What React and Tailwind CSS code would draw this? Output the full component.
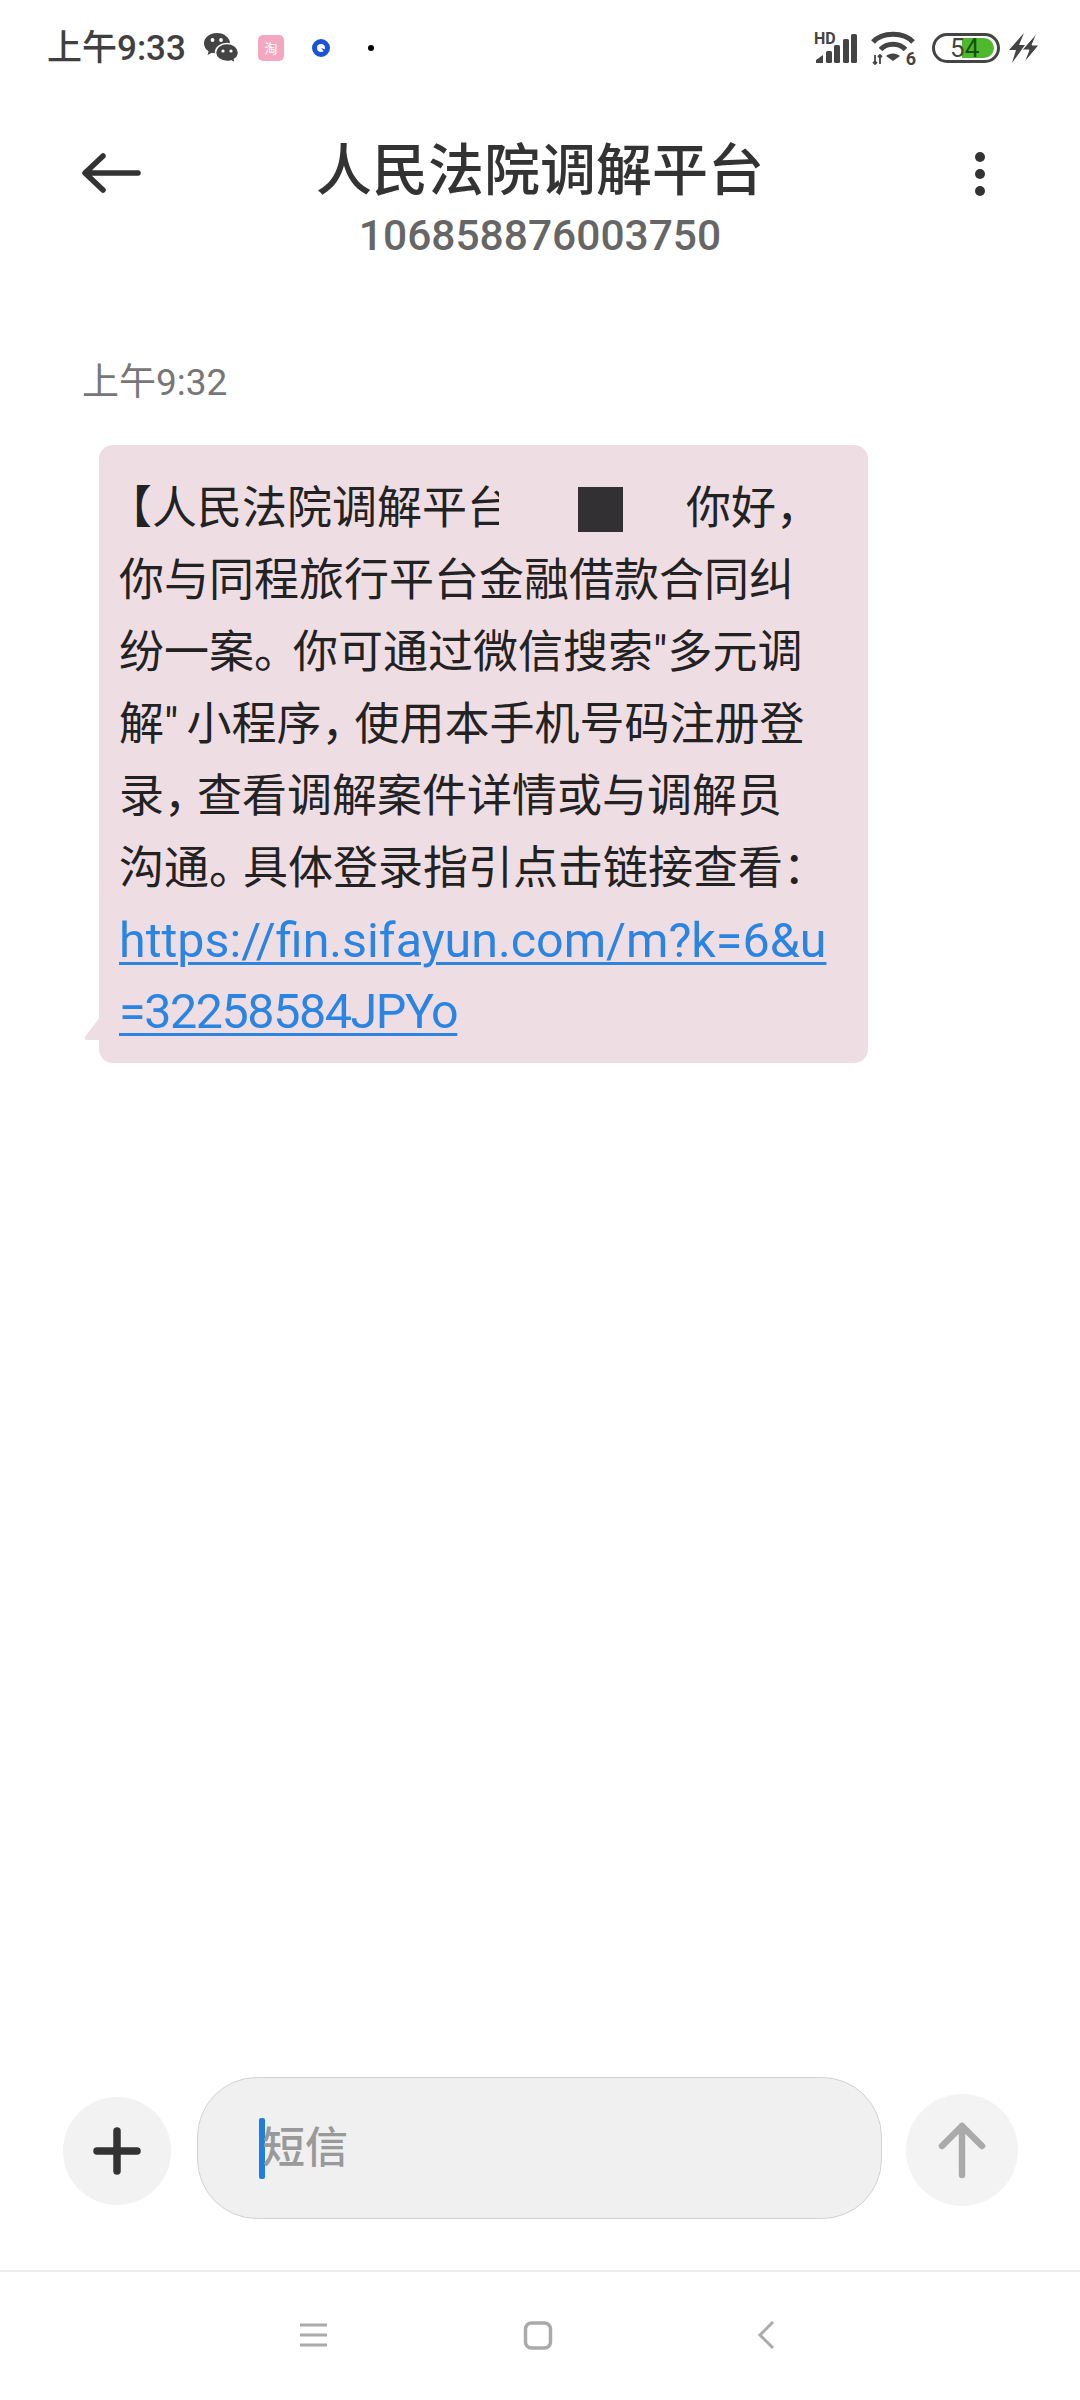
const sans = "font-['Roboto','Noto_Sans_CJK_SC',sans-serif]";

function Narrow({ children, className }) {
  return <span className={className}>{children}</span>;
}

function WechatIcon() {
  return (
    <svg width="36" height="32" viewBox="0 0 36 32">
      <path d="M14 1C6.8 1 1 5.6 1 11.4c0 3.2 1.8 6 4.6 7.9L4.6 23l4.2-2.2c1.6.5 3.3.7 5.2.7 7.2 0 13-4.6 13-10.1S21.200 1 14 1z" fill="#444" />
      <path d="M24 11.500c-6.400 0-11.500 4-11.500 9s5.100 9 11.500 9c1.400 0 2.700-.2 4-.6l4.500 2.600-1.100-4.200c2.500-1.600 4.100-4.100 4.100-6.800 0-5-5.100-9-11.500-9z" fill="#444" stroke="#fff" strokeWidth="1.500" />
      <circle cx="9.500" cy="8" r="1.900" fill="#fff" />
      <circle cx="18" cy="8" r="1.900" fill="#fff" />
      <circle cx="20" cy="19" r="1.600" fill="#fff" />
      <circle cx="28" cy="19" r="1.600" fill="#fff" />
    </svg>
  );
}

function SignalIcon() {
  return (
    <div className="relative h-[32px] w-[44px]">
      <span className="absolute left-0 top-[-1px] font-['Roboto',sans-serif] text-[16px] leading-[15px] font-bold text-[#444]">HD</span>
      <svg className="absolute left-0 top-0" width="44" height="32" viewBox="0 0 44 32">
        <path d="M2 31v-3l7-5v8z" fill="#444" />
        <rect x="12" y="19" width="6" height="12" rx="1.500" fill="#444" />
        <rect x="20" y="13" width="6" height="18" rx="1.500" fill="#444" />
        <rect x="29" y="7" width="6" height="24" rx="1.500" fill="#444" />
        <rect x="37" y="2" width="6" height="29" rx="1.500" fill="#444" />
      </svg>
    </div>
  );
}

function WifiIcon() {
  return (
    <div className="relative h-[34px] w-[46px]">
      <svg className="absolute left-0 top-0" width="46" height="34" viewBox="0 0 46 34" fill="none">
        <path d="M2 11C11 .5 33 .5 42 11" stroke="#444" strokeWidth="5" />
        <path d="M9.500 18.500C16 11.500 28 11.500 34.500 18.500" stroke="#444" strokeWidth="5" />
        <path d="M22 30l-7-5c3.500-3.500 10.500-3.500 14 0z" fill="#444" />
        <path d="M4 24v9M2 31l2 2 2-2M9 33v-9M7 26l2-2 2 2" stroke="#444" strokeWidth="1.800" />
      </svg>
      <span className="absolute right-[1px] bottom-[-3px] font-['Roboto',sans-serif] text-[18px] leading-[18px] font-bold text-[#444]">6</span>
    </div>
  );
}

function BatteryIcon() {
  return (
    <div className="relative flex h-[30px] w-[68px] items-center rounded-full border-[3px] border-[#444] bg-white">
      <div className="absolute left-[27px] top-[2px] h-[20px] w-[32px] rounded-r-[10px] bg-[#4fb82c]" />
      <span className="relative ml-[15px] font-['Roboto',sans-serif] text-[26px] leading-[24px] text-[#444]">5</span>
      <span className="relative font-['Roboto',sans-serif] text-[26px] leading-[24px] text-[#14520a]">4</span>
    </div>
  );
}

function BoltIcon() {
  return (
    <svg width="30" height="32" viewBox="0 0 30 32">
      <path d="M15 1L0 18h7L3 31l13-18H10z" fill="#444" />
      <path d="M28 1L13 18h7l-5 13 15-18h-7z" fill="#444" stroke="#fff" strokeWidth="1" />
    </svg>
  );
}

function StatusBar() {
  return (
    <div className="flex h-[96px] shrink-0 items-center pl-[47px] pr-[41px]">
      <span className={`${sans} text-[35px] leading-none font-medium text-[#404040]`}>上午9:33</span>
      <div className="ml-[17px]">
        <WechatIcon />
      </div>
      <div className={`ml-[19px] flex h-[26px] w-[26px] items-center justify-center rounded-[5px] bg-[#f4a7c1] ${sans} text-[13px] leading-none text-white`}>淘</div>
      <svg className="ml-[28px]" width="18" height="18" viewBox="0 0 18 18">
        <circle cx="9" cy="9" r="6.500" fill="#fff" stroke="#1a52d8" strokeWidth="5" />
        <path d="M9 9l6 2-2 3z" fill="#1a52d8" />
      </svg>
      <div className="ml-[38px] h-[6px] w-[6px] rounded-full bg-black" />
      <div className="ml-auto flex items-center">
        <SignalIcon />
        <div className="ml-[13px]">
          <WifiIcon />
        </div>
        <div className="ml-[15px]">
          <BatteryIcon />
        </div>
        <div className="ml-[9px]">
          <BoltIcon />
        </div>
      </div>
    </div>
  );
}

function Header() {
  return (
    <div className="grid shrink-0 grid-cols-[1fr_auto_1fr] items-start px-[81px] pt-[41px]">
      <svg className="mt-[15px]" width="60" height="42" viewBox="0 0 60 42" fill="none">
        <path d="M57 21H5M22 4L4 21l18 17" stroke="#333" strokeWidth="5.500" strokeLinecap="round" strokeLinejoin="round" />
      </svg>
      <div className="flex flex-col items-center">
        <div className={`${sans} text-[56px] leading-[68px] font-medium text-[#333]`}>人民法院调解平台</div>
        <div className={`${sans} mt-[1px] text-[42.5px] leading-[60px] font-medium text-[#666]`}>106858876003750</div>
      </div>
      <div className="mr-[14px] mt-[15px] flex flex-col gap-[7px] justify-self-end">
        <div className="h-[10px] w-[10px] rounded-full bg-[#333]" />
        <div className="h-[10px] w-[10px] rounded-full bg-[#333]" />
        <div className="h-[10px] w-[10px] rounded-full bg-[#333]" />
      </div>
    </div>
  );
}

function Bubble() {
  const comma = "tracking-[-12px]";
  return (
    <div className="relative ml-[99px] mt-[37px] w-[769px] rounded-[14px] bg-[#eedde3] pl-[20px] pt-[28px] pb-[16px]">
      <svg className="absolute left-[-15px] bottom-[23px]" width="16" height="23" viewBox="0 0 16 23">
        <path d="M16 0L1 20q-1 3 2 3h13z" fill="#eedde3" />
      </svg>
      <div className={`${sans} text-[45px] leading-[72px] text-[#222]`}>
        <div className="flex h-[72px] items-center">
          <span className="ml-[-12px] w-[392px] shrink-0 overflow-hidden whitespace-nowrap">【人民法院调解平台</span>
          <div className="ml-[79px] h-[45px] w-[45px] shrink-0 bg-[#333033]" />
          <span className="ml-[63px] whitespace-nowrap">你好，</span>
        </div>
        <div className="whitespace-nowrap">你与同程旅行平台金融借款合同纠</div>
        <div className="whitespace-nowrap">纷一案<Narrow className="tracking-[-6px]">。</Narrow>你可通过微信搜索"多元调</div>
        <div className="whitespace-nowrap">解<Narrow className="tracking-[8px]">"</Narrow>小程序<Narrow className={comma}>，</Narrow>使用本手机号码注册登</div>
        <div className="whitespace-nowrap">录<Narrow className={comma}>，</Narrow>查看调解案件详情或与调解员</div>
        <div className="whitespace-nowrap">沟通<Narrow className="tracking-[-11px]">。</Narrow>具体登录指引点击链接查看：</div>
        <div className="whitespace-nowrap text-[48.4px] leading-[71px] text-[#2a85e2] underline decoration-[3px] underline-offset-[5px]">https://fin.sifayun.com/m?k=6&amp;u</div>
        <div className="whitespace-nowrap text-[48.4px] leading-[71px] tracking-[-1.4px] text-[#2a85e2] underline decoration-[3px] underline-offset-[5px]">=32258584JPYo</div>
      </div>
    </div>
  );
}

function Composer() {
  return (
    <div className="flex h-[142px] shrink-0 items-center pl-[63px]">
      <div className="mt-[6px] flex h-[108px] w-[108px] shrink-0 items-center justify-center rounded-full bg-[#f2f2f2]">
        <svg width="48" height="48" viewBox="0 0 48 48" fill="none">
          <path d="M24 4v40M4 24h40" stroke="#333" strokeWidth="7.500" strokeLinecap="round" />
        </svg>
      </div>
      <div className="ml-[26px] flex h-[142px] w-[685px] shrink-0 items-center rounded-[60px] border border-[#d2d2d2] bg-[#f0f0f0] pl-[61px]">
        <div className="h-[61px] w-[6px] shrink-0 rounded-[2px] bg-[#1e7fe0]" />
        <span className={`${sans} ml-[-3px] text-[43px] leading-none font-medium text-[#999]`}>短信</span>
      </div>
      <div className="ml-[24px] mb-[13px] flex h-[112px] w-[112px] shrink-0 items-center justify-center self-end rounded-full bg-[#f3f3f3]">
        <svg width="50" height="58" viewBox="0 0 50 58" fill="none">
          <path d="M25 54V5M5 25L25 5l20 20" stroke="#aaa" strokeWidth="6.500" strokeLinecap="round" strokeLinejoin="round" />
        </svg>
      </div>
    </div>
  );
}

function NavBar() {
  return (
    <div className="relative flex h-[130px] shrink-0 items-center border-t-2 border-[#ececec] pb-[2px]">
      <svg className="ml-[299px]" width="29" height="26" viewBox="0 0 29 26" fill="none">
        <path d="M1 3h27M1 13h27M1 23h27" stroke="#aaa" strokeWidth="3" />
      </svg>
      <svg className="ml-[195px]" width="30" height="30" viewBox="0 0 30 30" fill="none">
        <rect x="2.500" y="3" width="25" height="25" rx="6" stroke="#aaa" strokeWidth="3.500" />
      </svg>
      <svg className="ml-[204px]" width="18" height="30" viewBox="0 0 18 30" fill="none">
        <path d="M16 2L3 15l13 13" stroke="#aaa" strokeWidth="3" />
      </svg>
    </div>
  );
}

export default function App() {
  return (
    <div className="flex h-[2400px] w-[1080px] flex-col overflow-hidden bg-white">
      <StatusBar />
      <Header />
      <div className={`${sans} ml-[82px] mt-[92px] text-[37px] leading-[50px] text-[#777]`}>上午9:32</div>
      <Bubble />
      <div className="flex-1" />
      <Composer />
      <div className="h-[51px] shrink-0" />
      <NavBar />
    </div>
  );
}
